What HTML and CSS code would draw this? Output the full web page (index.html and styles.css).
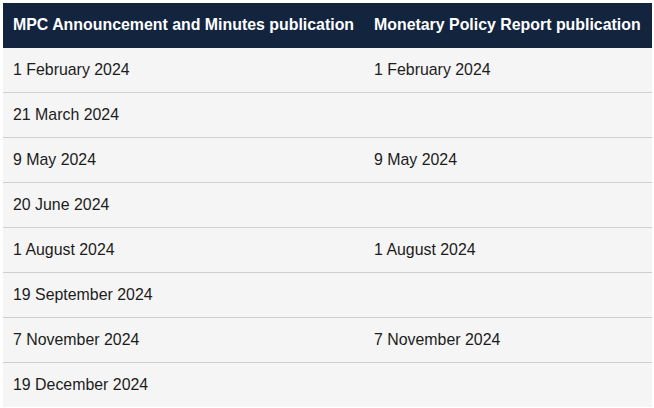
FILE: index.html
```html
<!DOCTYPE html>
<html>
<head>
<meta charset="utf-8">
<link rel="stylesheet" href="styles.css">
</head>
<body>
<table class="dates">
  <thead>
    <tr><th class="col-mpc">MPC Announcement and Minutes publication</th><th>Monetary Policy Report publication</th></tr>
  </thead>
  <tbody>
    <tr><td>1 February 2024</td><td>1 February 2024</td></tr>
    <tr><td>21 March 2024</td><td></td></tr>
    <tr><td>9 May 2024</td><td>9 May 2024</td></tr>
    <tr><td>20 June 2024</td><td></td></tr>
    <tr><td>1 August 2024</td><td>1 August 2024</td></tr>
    <tr><td>19 September 2024</td><td></td></tr>
    <tr><td>7 November 2024</td><td>7 November 2024</td></tr>
    <tr><td>19 December 2024</td><td></td></tr>
  </tbody>
</table>
</body>
</html>
```
FILE: styles.css
```css
html, body { margin: 0; padding: 0; background: #fff; }
body { padding: 3px 0 0 3px; font-family: "Liberation Sans", Arial, sans-serif; }
.dates { border-collapse: collapse; width: 649px; table-layout: fixed; }
.dates .col-mpc { width: 341px; }
.dates th {
  background: #13243f;
  color: #fff;
  font-weight: bold;
  font-size: 15.9px;
  text-align: left;
  padding: 0 10px 1px;
  height: 44px;
  white-space: nowrap;
}
.dates td {
  background: #f5f5f5;
  color: #1c1c1c;
  font-size: 15.9px;
  padding: 0 10px;
  height: 44px;
  border-bottom: 1px solid #cfcfcf;
}
.dates tr:last-child td { border-bottom: none; }
```
